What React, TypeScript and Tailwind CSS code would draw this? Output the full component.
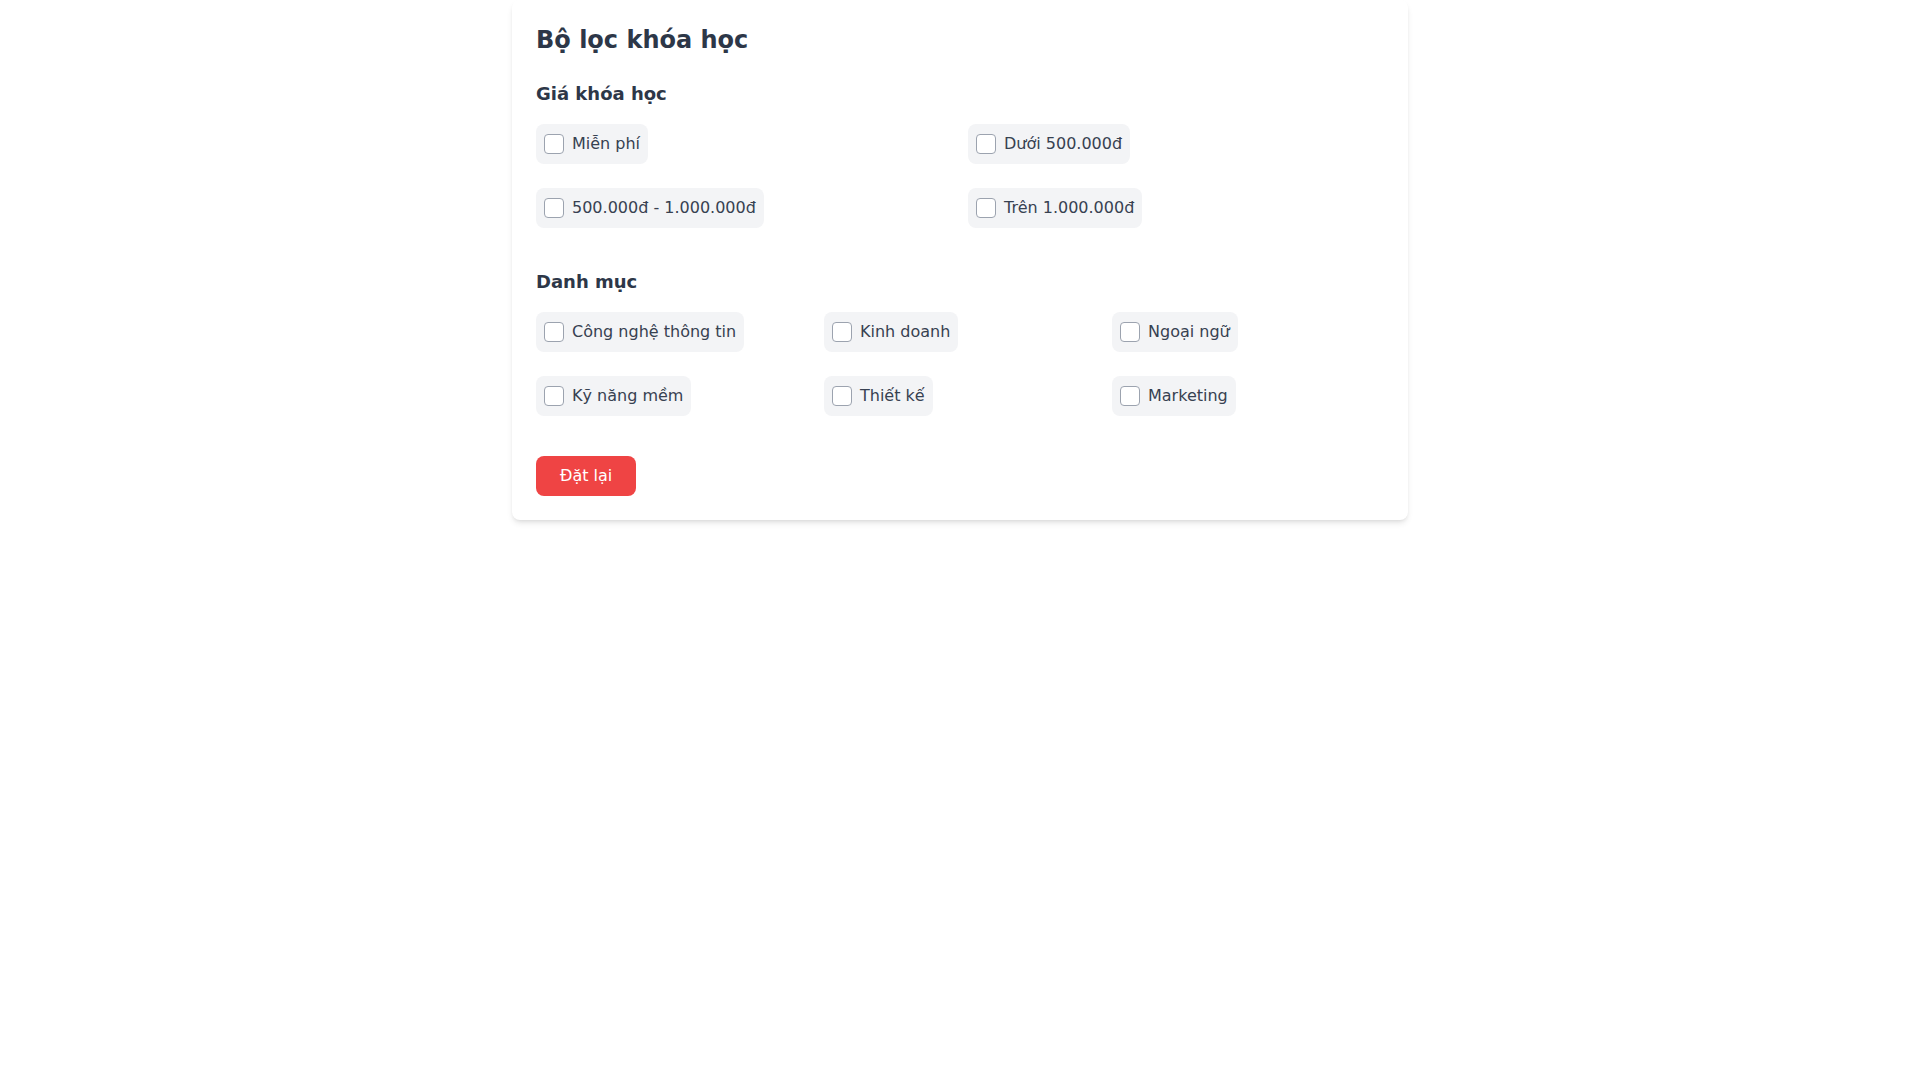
const priceOptions = ["Miễn phí", "Dưới 500.000đ", "500.000đ - 1.000.000đ", "Trên 1.000.000đ"];
const categoryOptions = ["Công nghệ thông tin", "Kinh doanh", "Ngoại ngữ", "Kỹ năng mềm", "Thiết kế", "Marketing"];

function Option({ label }: { label: string }) {
  return (
    <div>
      <label className="inline-flex items-center gap-2 rounded-lg bg-[#f3f4f6] px-2 py-2 text-base leading-6 text-[#374151] cursor-pointer">
        <input
          type="checkbox"
          className="m-0 h-5 w-5 appearance-none rounded-[4px] border border-[#9ca3af] bg-white"
        />
        <span>{label}</span>
      </label>
    </div>
  );
}

export default function App() {
  return (
    <div className="min-h-screen bg-white" style={{ fontFamily: '"DejaVu Sans", sans-serif' }}>
      <div className="mx-auto max-w-4xl rounded-lg bg-white p-6 shadow-md">
        <h2 className="mb-6 text-2xl font-bold text-[#2d3748]">Bộ lọc khóa học</h2>

        <div className="mb-10">
          <h3 className="mb-4 text-lg font-semibold text-[#2d3748]">Giá khóa học</h3>
          <div className="grid grid-cols-2 gap-x-4 gap-y-6">
            {priceOptions.map((p) => (
              <Option key={p} label={p} />
            ))}
          </div>
        </div>

        <div className="mb-10">
          <h3 className="mb-4 text-lg font-semibold text-[#2d3748]">Danh mục</h3>
          <div className="grid grid-cols-3 gap-x-4 gap-y-6">
            {categoryOptions.map((c) => (
              <Option key={c} label={c} />
            ))}
          </div>
        </div>

        <button className="rounded-lg bg-[#ef4444] px-6 py-2 text-base leading-6 text-white">Đặt lại</button>
      </div>
    </div>
  );
}
